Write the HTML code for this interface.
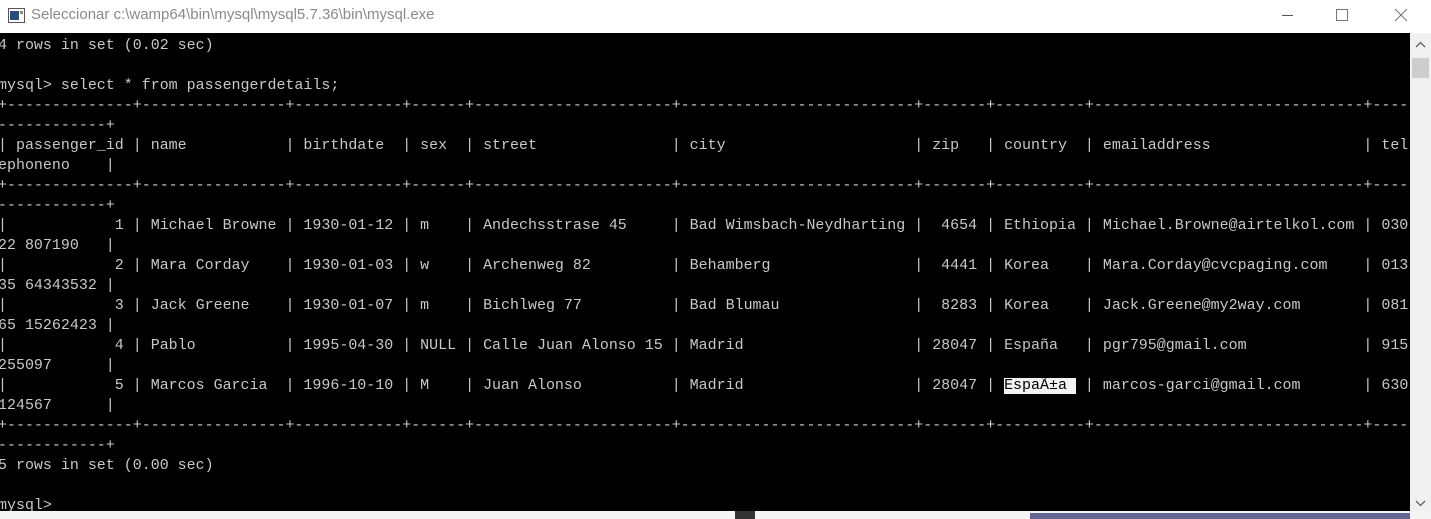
<!DOCTYPE html>
<html><head><meta charset="utf-8"><style>
html,body{margin:0;padding:0;width:1431px;height:519px;overflow:hidden;background:#fff;position:relative}
.title{position:absolute;left:0;top:0;width:1431px;height:33px;background:#fff}
.ttext{position:absolute;left:31px;top:6px;font:15px "Liberation Sans",sans-serif;color:#8a8a8a;white-space:nowrap}
.con{position:absolute;left:0;top:33px;width:1410px;height:478px;background:#000;overflow:hidden}
pre{position:absolute;left:-2px;top:3px;margin:0;font-family:"Liberation Mono",monospace;font-size:14.97px;line-height:20px;color:#c8c8c8;white-space:pre}
.hl{background:#f2f2f2;color:#000}
.sb{position:absolute;left:1410px;top:33px;width:21px;height:478px;background:#f0f0f0}
.thumb{position:absolute;left:2px;top:25px;width:17px;height:20px;background:#cdcdcd}
.bot{position:absolute;left:0;top:511px;width:1431px;height:8px;background:#f5f5f5}
</style></head><body>
<div class="title">
<svg style="position:absolute;left:8px;top:8px" width="17" height="15" viewBox="0 0 17 15"><rect x="0.5" y="0.5" width="16" height="14" fill="#fff" stroke="#555"/><rect x="2" y="3" width="9" height="9" fill="#2b4c7e"/><rect x="12" y="3" width="3" height="3" fill="#888"/></svg>
<div class="ttext">Seleccionar c:\wamp64\bin\mysql\mysql5.7.36\bin\mysql.exe</div>
<svg style="position:absolute;left:1270px;top:0" width="161" height="33" viewBox="0 0 161 33"><line x1="12" y1="15.5" x2="23" y2="15.5" stroke="#555"/><rect x="66.5" y="9.5" width="11" height="11" fill="none" stroke="#777"/><path d="M125 9 L137 21 M137 9 L125 21" stroke="#777" stroke-width="1"/></svg>
</div>
<div class="con"><pre>4 rows in set (0.02 sec)

mysql&gt; select * from passengerdetails;
+--------------+----------------+------------+------+----------------------+--------------------------+-------+----------+------------------------------+----
------------+
| passenger_id | name           | birthdate  | sex  | street               | city                     | zip   | country  | emailaddress                 | tel
ephoneno    |
+--------------+----------------+------------+------+----------------------+--------------------------+-------+----------+------------------------------+----
------------+
|            1 | Michael Browne | 1930-01-12 | m    | Andechsstrase 45     | Bad Wimsbach-Neydharting |  4654 | Ethiopia | Michael.Browne@airtelkol.com | 030
22 807190   |
|            2 | Mara Corday    | 1930-01-03 | w    | Archenweg 82         | Behamberg                |  4441 | Korea    | Mara.Corday@cvcpaging.com    | 013
35 64343532 |
|            3 | Jack Greene    | 1930-01-07 | m    | Bichlweg 77          | Bad Blumau               |  8283 | Korea    | Jack.Greene@my2way.com       | 081
65 15262423 |
|            4 | Pablo          | 1995-04-30 | NULL | Calle Juan Alonso 15 | Madrid                   | 28047 | España   | pgr795@gmail.com             | 915
255097      |
|            5 | Marcos Garcia  | 1996-10-10 | M    | Juan Alonso          | Madrid                   | 28047 | <span class="hl">EspaÃ±a </span> | marcos-garci@gmail.com       | 630
124567      |
+--------------+----------------+------------+------+----------------------+--------------------------+-------+----------+------------------------------+----
------------+
5 rows in set (0.00 sec)

mysql&gt;</pre></div>
<div class="sb"><svg style="position:absolute;left:5px;top:8px" width="11" height="8" viewBox="0 0 11 8"><path d="M1 6 L5.5 1.5 L10 6" fill="none" stroke="#606060" stroke-width="1.3"/></svg><div class="thumb"></div><svg style="position:absolute;left:5px;top:466px" width="11" height="8" viewBox="0 0 11 8"><path d="M1 2 L5.5 6.5 L10 2" fill="none" stroke="#606060" stroke-width="1.3"/></svg></div>
<div class="bot"><div style="position:absolute;left:735px;top:0;width:20px;height:8px;background:#333"></div><div style="position:absolute;left:1030px;top:2px;width:380px;height:6px;background:#2a2a6a;opacity:.7"></div></div>
</body></html>
